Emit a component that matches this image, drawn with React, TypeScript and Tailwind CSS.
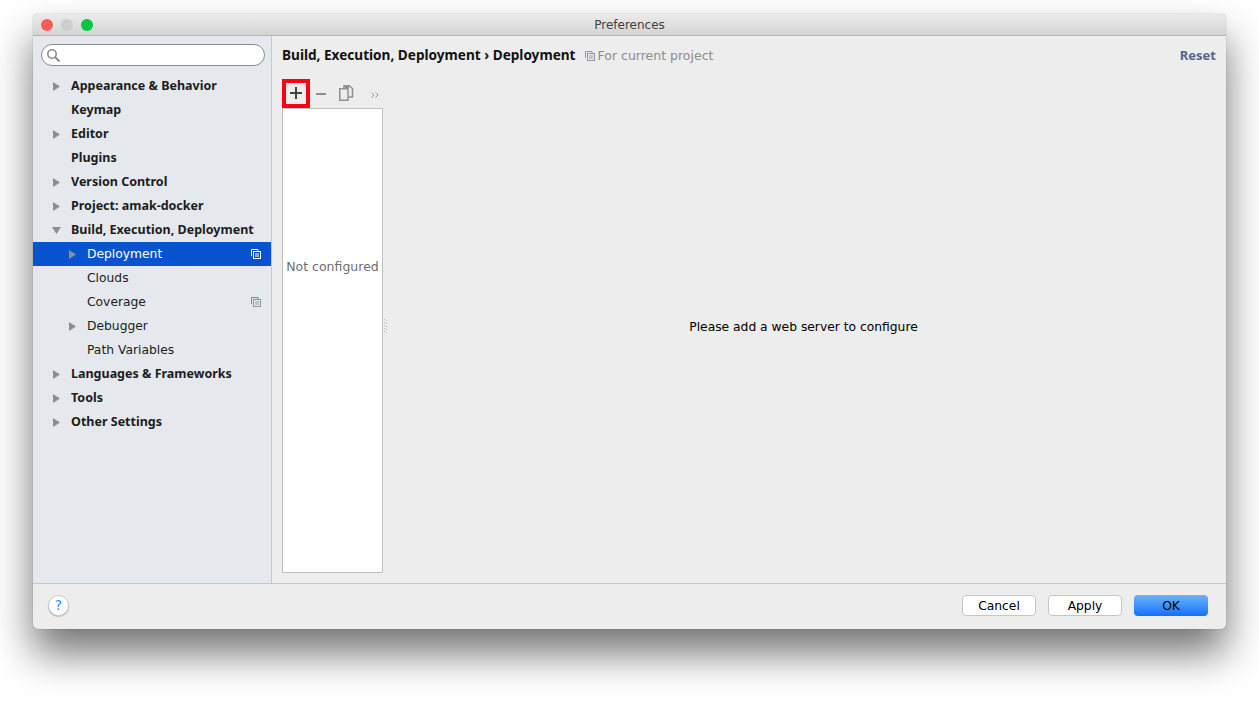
import React from 'react';

type TreeRow = {
  label: string;
  indent?: boolean;
  arrow?: 'right' | 'down';
  bold?: boolean;
  selected?: boolean;
  copy?: boolean;
};

const ROWS: TreeRow[] = [
  { label: 'Appearance & Behavior', arrow: 'right', bold: true },
  { label: 'Keymap', bold: true },
  { label: 'Editor', arrow: 'right', bold: true },
  { label: 'Plugins', bold: true },
  { label: 'Version Control', arrow: 'right', bold: true },
  { label: 'Project: amak-docker', arrow: 'right', bold: true },
  { label: 'Build, Execution, Deployment', arrow: 'down', bold: true },
  { label: 'Deployment', indent: true, arrow: 'right', selected: true, copy: true },
  { label: 'Clouds', indent: true },
  { label: 'Coverage', indent: true, copy: true },
  { label: 'Debugger', indent: true, arrow: 'right' },
  { label: 'Path Variables', indent: true },
  { label: 'Languages & Frameworks', arrow: 'right', bold: true },
  { label: 'Tools', arrow: 'right', bold: true },
  { label: 'Other Settings', arrow: 'right', bold: true },
];

const CopyIcon = ({ front, back }: { front: string; back: string }) => (
  <svg width="10" height="10" viewBox="0 0 10 10" fill="none">
    <path d="M0.5 7V0.5H7V2.5" stroke={back} />
    <rect x="2.5" y="2.5" width="7" height="7" stroke={front} />
    <path d="M4 5H8M4 7H8" stroke={front} />
  </svg>
);

const Arrow = ({ dir }: { dir: 'right' | 'down' }) => (
  <svg width="9" height="9" viewBox="0 0 9 9">
    {dir === 'right' ? <path d="M1 0L8 4.5L1 9Z" fill="#8e8e8e" /> : <path d="M0 1H9L4.5 8Z" fill="#8e8e8e" />}
  </svg>
);

const Row = ({ row }: { row: TreeRow }) => (
  <div
    className={`h-6 flex items-center ${row.bold ? "font-['Noto_Sans',sans-serif] font-bold text-[12.5px]" : 'text-[12.3px]'} ${
      row.selected ? 'bg-[#0a53d0] text-white' : 'text-[#1c1c1c]'
    }`}
  >
    <div className={`${row.indent ? 'w-[54px] pl-[35px]' : 'w-[38px] pl-[19px]'} shrink-0 flex items-center`}>
      {row.arrow && <Arrow dir={row.arrow} />}
    </div>
    <span className="flex-1 whitespace-nowrap">{row.label}</span>
    {row.copy && (
      <div className="pr-[10px] flex items-center">
        {row.selected ? <CopyIcon front="#ffffff" back="#ffffff" /> : <CopyIcon front="#8f979e" back="#4d94d0" />}
      </div>
    )}
  </div>
);

const Sidebar = () => (
  <div className="w-[239px] shrink-0 bg-[#e5e9ed] border-r border-[#c8c8c8] flex flex-col">
    <div className="pl-2 pr-[6px] pt-2 pb-[8px]">
      <div className="h-[22px] bg-white rounded-full border border-[#8a8a8a] flex items-center pl-[4px]">
        <svg width="15" height="15" viewBox="0 0 15 15" fill="none">
          <circle cx="6" cy="6" r="4.2" stroke="#8b8b8b" strokeWidth="1.6" />
          <path d="M9.2 9.2L13.5 13.5" stroke="#8b8b8b" strokeWidth="2" />
        </svg>
      </div>
    </div>
    {ROWS.map(row => (
      <Row key={row.label} row={row} />
    ))}
  </div>
);

const Toolbar = () => (
  <div className="flex items-center h-[30px]">
    <div className="w-[28px] h-[29px] border-[4px] border-[#fb0017] flex items-center justify-center">
      <svg width="12" height="12" viewBox="0 0 12 12">
        <path d="M5 0H7V5H12V7H7V12H5V7H0V5H5Z" fill="#444444" />
      </svg>
    </div>
    <div className="ml-[6px] w-[12px] flex items-center mt-[1px]">
      <div className="w-[10px] h-[2px] bg-[#8f8f8f]" />
    </div>
    <div className="ml-[11px] -mt-[1px]">
      <svg width="15" height="16" viewBox="0 0 15 16" fill="none">
        <path d="M5 3V0.75H10L13.5 3.5V12H9.5" stroke="#8f8f8f" strokeWidth="1.5" />
        <path d="M0.75 3.75H9V15.25H0.75Z" stroke="#8f8f8f" strokeWidth="1.5" />
        <rect x="6" y="0" width="4" height="3" fill="#8f8f8f" />
      </svg>
    </div>
    <div className="ml-[17px] mt-[3px]">
      <svg width="8" height="6" viewBox="0 0 8 6" fill="none">
        <path d="M0.5 0.5L3 3L0.5 5.5M4.5 0.5L7 3L4.5 5.5" stroke="#9b9b9b" />
      </svg>
    </div>
  </div>
);

const Content = () => (
  <div className="flex-1 min-w-0 flex flex-col pt-[9px] pl-[10px] pr-[10px] pb-[10px]">
    <div className="h-[22px] flex items-center text-[12.5px]">
      <span className="-mt-[2px] font-['Noto_Sans',sans-serif] font-bold text-[13.6px] text-[#111111]">
        Build, Execution, Deployment › Deployment
      </span>
      <span className="ml-[9px] mr-[3px] flex items-center">
        <CopyIcon front="#8f979e" back="#8f979e" />
      </span>
      <span className="text-[#8c8c8c]">For current project</span>
      <span className="ml-auto font-['Noto_Sans',sans-serif] font-bold text-[13px] text-[#56658f]">Reset</span>
    </div>
    <div className="mt-[11px]">
      <Toolbar />
    </div>
    <div className="flex-1 flex min-h-0">
      <div className="w-[101px] bg-white border border-[#c0c0c0] flex items-center justify-center pb-[147px] whitespace-nowrap text-[12.5px] text-[#6e6e6e]">
        Not configured
      </div>
      <div className="w-[6px] flex items-center justify-center pb-[30px]">
        <svg width="4" height="14" viewBox="0 0 4 14" fill="#b5b5b5">
          <rect x="0" y="0" width="1" height="1" />
          <rect x="2" y="1" width="1" height="1" />
          <rect x="0" y="3" width="1" height="1" />
          <rect x="2" y="4" width="1" height="1" />
          <rect x="0" y="6" width="1" height="1" />
          <rect x="2" y="7" width="1" height="1" />
          <rect x="0" y="9" width="1" height="1" />
          <rect x="2" y="10" width="1" height="1" />
          <rect x="0" y="12" width="1" height="1" />
          <rect x="2" y="13" width="1" height="1" />
        </svg>
      </div>
      <div className="flex-1 flex items-center justify-center pb-[27px] pl-[2px] text-[12.3px] text-black">
        Please add a web server to configure
      </div>
    </div>
  </div>
);

const Footer = () => (
  <div className="h-[46px] shrink-0 border-t border-[#c8c8c8] flex items-center pb-[2px] pl-[15px] pr-[18px] text-[12.3px]">
    <div className="w-[21px] h-[21px] rounded-full bg-white border border-[#c9c9c9] shadow-[0_1px_1px_rgba(0,0,0,0.2)] flex items-center justify-center text-[#2d8cff] text-[14px]">
      ?
    </div>
    <button className="ml-auto w-[74px] h-[21px] pt-[2px] rounded-[4px] bg-white border border-[#c6c6c6] text-black flex items-center justify-center">
      Cancel
    </button>
    <button className="ml-[12px] w-[74px] h-[21px] pt-[2px] rounded-[4px] bg-white border border-[#c6c6c6] text-black flex items-center justify-center">
      Apply
    </button>
    <button className="ml-[12px] w-[74px] h-[21px] pt-[1px] rounded-[4px] bg-gradient-to-b from-[#6cb3fb] to-[#0f6ffb] text-black flex items-center justify-center">
      OK
    </button>
  </div>
);

export default function App() {
  return (
    <div className="w-[1259px] h-[725px] bg-white overflow-hidden pl-[33px] pt-[14px] font-['DejaVu_Sans',sans-serif]">
      <div className="w-[1193px] h-[615px] rounded-[5px] bg-[#ededed] flex flex-col overflow-hidden shadow-[0_0_1px_rgba(0,0,0,0.5),0_24px_40px_rgba(0,0,0,0.55)]">
        <div className="h-[22px] shrink-0 bg-gradient-to-b from-[#ebebeb] to-[#d4d4d4] border-b border-[#b4b4b4] relative flex items-center justify-center text-[12px] text-[#404040]">
          <div className="absolute left-[8px] top-[5px] flex gap-[8px]">
            <div className="w-3 h-3 rounded-full bg-[#fc5b57]" />
            <div className="w-3 h-3 rounded-full bg-[#cecece]" />
            <div className="w-3 h-3 rounded-full bg-[#00c941]" />
          </div>
          Preferences
        </div>
        <div className="flex-1 flex min-h-0">
          <Sidebar />
          <Content />
        </div>
        <Footer />
      </div>
    </div>
  );
}
